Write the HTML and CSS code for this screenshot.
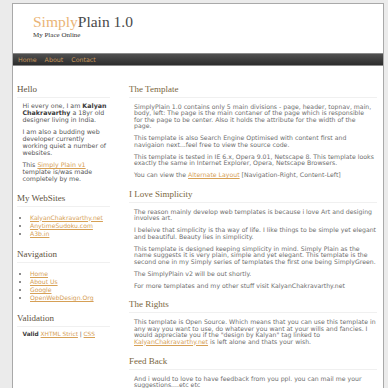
FILE: index.html
```html
<!DOCTYPE html>
<html>
<head>
<meta charset="utf-8">
<title>SimplyPlain 1.0</title>
<link rel="stylesheet" href="styles.css">
</head>
<body>
<div class="page">
  <div class="header">
    <h1 class="logo"><span class="logo-accent">Simply</span>Plain 1.0</h1>
    <div class="tagline">My Place Online</div>
  </div>
  <div class="topnav">
    <a href="#">Home</a>
    <a href="#">About</a>
    <a href="#">Contact</a>
  </div>
  <div class="content">
    <div class="left">
      <h2>Hello</h2>
      <p>Hi every one, I am <b>Kalyan<br>Chakravarthy</b> a 18yr old<br>designer living in India.</p>
      <p>I am also a budding web<br>developer currently<br>working quiet a number of<br>websites.</p>
      <p>This <a href="#">Simply Plain v1</a><br>template is/was made<br>completely by me.</p>
      <h2>My WebSites</h2>
      <ul>
        <li><a href="#">KalyanChakravarthy.net</a></li>
        <li><a href="#">AnytimeSudoku.com</a></li>
        <li><a href="#">A3b.in</a></li>
      </ul>
      <h2>Navigation</h2>
      <ul>
        <li><a href="#">Home</a></li>
        <li><a href="#">About Us</a></li>
        <li><a href="#">Google</a></li>
        <li><a href="#">OpenWebDesign.Org</a></li>
      </ul>
      <h2>Validation</h2>
      <p class="valid"><b>Valid</b> <a href="#">XHTML Strict</a> | <a href="#">CSS</a></p>
    </div>
    <div class="main">
      <h2>The Template</h2>
      <p>SimplyPlain 1.0 contains only 5 main divisions - page, header, topnav, main,<br>body, left: The page is the main contaner of the page which is responsible<br>for the page to be center. Also it holds the attribute for the width of the<br>page.</p>
      <p>This template is also Search Engine Optimised with content first and<br>navigaion next...feel free to view the source code.</p>
      <p>This template is tested in IE 6.x, Opera 9.01, Netscape 8. This template looks<br>exactly the same in Internet Explorer, Opera, Netscape Browsers.</p>
      <p>You can view the <a href="#">Alternate Layout</a> [Navigation-Right, Content-Left]</p>
      <h2>I Love Simplicity</h2>
      <p>The reason mainly develop web templates is because i love Art and desiging<br>involves art.</p>
      <p>I beleive that simplicity is tha way of life. I like things to be simple yet elegant<br>and beautiful. Beauty lies in simplicity.</p>
      <p>This template is designed keeping simplicity in mind. Simply Plain as the<br>name suggests it is very plain, simple and yet elegant. This template is the<br>second one in my Simply series of templates the first one being SimplyGreen.</p>
      <p>The SimplyPlain v2 will be out shortly.</p>
      <p>For more templates and my other stuff visit KalyanChakravarthy.net</p>
      <h2>The Rights</h2>
      <p>This template is Open Source. Which means that you can use this template in<br>any way you want to use, do whatever you want at your wills and fancies. I<br>would appreciate you if the "design by Kalyan" tag linked to<br><a href="#">KalyanChakravarthy.net</a> is left alone and thats your wish.</p>
      <h2>Feed Back</h2>
      <p>And i would to love to have feedback from you ppl. you can mail me your<br>suggestions....etc etc</p>
    </div>
  </div>
</div>
</body>
</html>
```

FILE: styles.css
```css
html, body {
  margin: 0;
  padding: 0;
}
body {
  background: #ebebeb;
  font-family: "DejaVu Sans", Verdana, sans-serif;
  color: #555;
}
.page {
  margin: 3px 4px 0 12px;
  background: #fff;
  border: 1px solid #a9a9a9;
  min-height: 420px;
}
.header {
  padding: 10px 0 0 20px;
  height: 39px;
}
.logo {
  margin: 0;
  font-family: "Liberation Serif", "Times New Roman", serif;
  font-weight: normal;
  font-size: 15.5px;
  line-height: 15px;
  color: #4a4a4a;
}
.logo-accent {
  color: #eab577;
}
.tagline {
  margin-top: 2px;
  font-family: "Liberation Serif", "Times New Roman", serif;
  font-size: 7px;
  line-height: 8px;
  color: #333;
}
.topnav {
  height: 11px;
  border: 1px solid #8a8a8a;
  border-left: 0;
  border-right: 0;
  background: linear-gradient(#505050, #2c2c2c);
  display: flex;
  gap: 8px;
  padding-left: 5px;
  align-items: center;
}
.topnav a {
  color: #c9975a;
  text-decoration: none;
  font-size: 6.3px;
  line-height: 11px;
}
.content {
  display: flex;
  padding: 18px 6px 0 4px;
}
.left {
  width: 93px;
  flex: none;
}
.main {
  flex: 1;
  margin-left: 19px;
}
h2 {
  margin: 10.5px 0 6px;
  padding: 0 0 3px 0;
  font-family: "Liberation Serif", "Times New Roman", serif;
  font-weight: normal;
  font-size: 9px;
  line-height: 10px;
  color: #7a6640;
  border-bottom: 1px solid #f0f0f0;
}
h2:first-child {
  margin-top: 0;
}
.left h2 {
  color: #5e5240;
  margin-bottom: 4px;
}
.main p {
  margin: 0 0 5.6px;
  padding-left: 5px;
  font-size: 6.2px;
  line-height: 6.4px;
  white-space: nowrap;
  color: #6e6e6e;
}
.left p {
  margin: 0 0 5px;
  padding-left: 5.5px;
  font-size: 6.3px;
  line-height: 7px;
  white-space: nowrap;
  color: #555;
}
.left b {
  color: #3a3a3a;
}
a {
  color: #d6a056;
}
.left ul {
  margin: 0 0 6px;
  padding: 3px 0 0 13px;
  font-size: 6.1px;
  line-height: 8.2px;
  white-space: nowrap;
}
.left li {
  color: #666;
}
.left p.valid {
  font-size: 5.8px;
}
```
